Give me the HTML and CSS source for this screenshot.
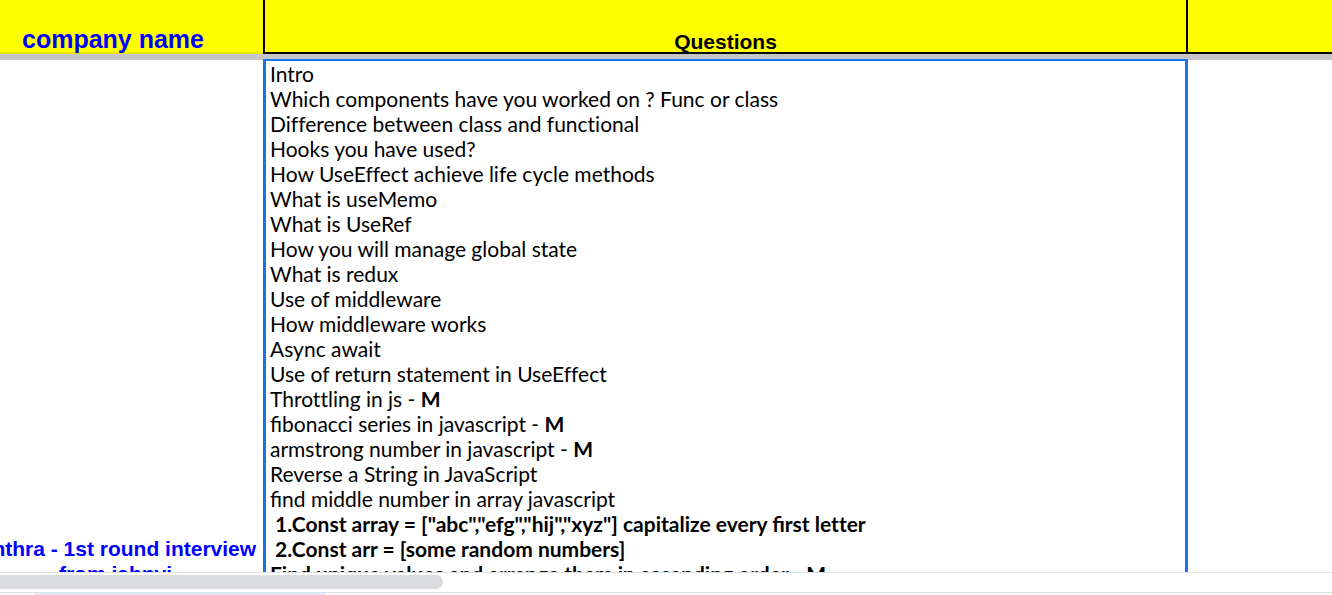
FILE: index.html
```html
<!DOCTYPE html>
<html lang="en">
<head>
<meta charset="utf-8">
<title>Interview questions</title>
<link rel="stylesheet" href="styles.css">
</head>
<body>
<main class="sheet">
  <div class="grid">
    <table class="cells">
      <colgroup><col class="col-company"><col class="col-questions"><col></colgroup>
      <thead>
        <tr class="header">
          <th class="company-head" scope="col">company name</th>
          <th class="questions-head" scope="col">Questions</th>
          <th></th>
        </tr>
        <tr class="freeze"><td colspan="3"></td></tr>
      </thead>
      <tbody>
        <tr>
          <td class="company">Ianthra - 1st round interview<br>from jahnvi</td>
          <td class="active">
            <div>Intro</div>
            <div>Which components have you worked on ? Func or class</div>
            <div>Difference between class and functional</div>
            <div>Hooks you have used?</div>
            <div>How UseEffect achieve life cycle methods</div>
            <div>What is useMemo</div>
            <div>What is UseRef</div>
            <div>How you will manage global state</div>
            <div>What is redux</div>
            <div>Use of middleware</div>
            <div>How middleware works</div>
            <div>Async await</div>
            <div>Use of return statement in UseEffect</div>
            <div>Throttling in js - <b>M</b></div>
            <div><span class="liga">fibonacci</span> series in javascript - <b>M</b></div>
            <div>armstrong number in javascript - <b>M</b></div>
            <div>Reverse a String in JavaScript</div>
            <div><span class="liga">find</span> middle number in array javascript</div>
            <div><b>&nbsp;1.Const array = ["abc","efg","hij","xyz"] capitalize every <span class="liga">first</span> letter</b></div>
            <div><b>&nbsp;2.Const arr = [some random numbers]</b></div>
            <div><b>Find unique values and arrange them in ascending order - M</b></div>
          </td>
          <td></td>
        </tr>
      </tbody>
    </table>
  </div>
  <div class="scrollbar"><div class="thumb"></div></div>
  <footer class="tabs"><div class="tab"></div></footer>
</main>
</body>
</html>
```
FILE: styles.css
```css
body {
  margin: 0;
  background: #fff;
  color: #000;
}

.sheet {
  display: flex;
  flex-direction: column;
  height: 100vh;
  overflow: hidden;
}

.grid {
  flex: 1;
  min-height: 0;
  overflow: hidden;
}

/* The first column is partly scrolled out of view. */
.cells {
  width: calc(100% + 32px);
  margin-left: -32px;
  table-layout: fixed;
  border-collapse: separate;
  border-spacing: 0;
}

.cells th,
.cells td {
  box-sizing: border-box;
  padding: 0;
}

.col-company { width: 295px; }
.col-questions { width: 923px; }

.header th {
  height: 54px;
  background: #ff0;
  border-bottom: 2px solid #000;
  border-left: 2px solid #000;
  vertical-align: bottom;
  font: bold 21px/20px "Liberation Sans", Arial, sans-serif;
}

.header .company-head {
  border-left: 0;
  border-bottom-color: #e6e600;
  padding-right: 5px;
  color: #00f;
  font-size: 25px;
  line-height: 26px;
}

.freeze td {
  height: 6px;
  background: #c6c6c6;
}

.cells .company {
  padding-bottom: 2px;
  color: #00f;
  font: bold 21px/25px "Liberation Sans", Arial, sans-serif;
  text-align: center;
  vertical-align: bottom;
  white-space: nowrap;
}

.cells .active {
  position: relative;
  padding: 1px 7px 2px;
  font: 21px/25px Lato, sans-serif;
  font-variant-ligatures: none;
}

.active .liga {
  font-variant-ligatures: normal;
}

.active::before {
  content: "";
  position: absolute;
  inset: -1px -2px 0 0;
  border: solid #1a73e8;
  border-width: 2px 3px;
}

.scrollbar {
  height: 19px;
  border-top: 1px solid #dddfe0;
}

.thumb {
  width: 443px;
  height: 14px;
  margin-top: 2px;
  border-radius: 0 7px 7px 0;
  background: #dadce0;
}

.tabs {
  height: 2px;
  padding-left: 35px;
  border-top: 1px solid #dddfe0;
  background: #f9fbfb;
}

.tab {
  width: 290px;
  height: 2px;
  background: #e1e8f7;
}
```
